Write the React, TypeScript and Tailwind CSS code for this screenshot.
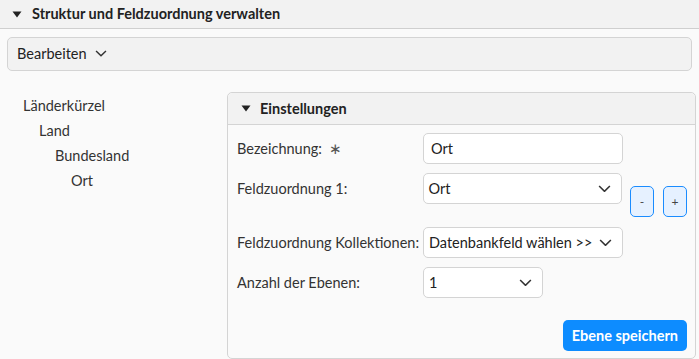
import React from "react";

function Caret() {
  return (
    <svg width="10" height="7" viewBox="0 0 10 7" className="shrink-0">
      <path d="M0.5 0.5 L9.5 0.5 L5 6.5 Z" fill="#222" />
    </svg>
  );
}

function Chevron({ size = 13 }: { size?: number }) {
  return (
    <svg width={size} height={size * 0.6} viewBox="0 0 13 8" className="shrink-0">
      <path d="M1 1 L6.5 6.5 L12 1" fill="none" stroke="#333" strokeWidth="1.6" />
    </svg>
  );
}

function Select({ value, width }: { value: string; width: string }) {
  return (
    <div
      className={`${width} h-[31px] rounded-[5px] border border-[#d4d4d4] bg-white flex items-center justify-between pl-[5px] pr-[10px] text-[14.5px] text-[#222]`}
    >
      <span>{value}</span>
      <Chevron />
    </div>
  );
}

export default function App() {
  return (
    <div
      className="w-[699px] h-[359px] overflow-hidden bg-[#fafafa] text-[#333]"
      style={{ fontFamily: "Lato, 'Noto Sans', sans-serif" }}
    >
      {/* Section header */}
      <div className="h-[29px] bg-[#f2f2f2] border-b border-[#cfcfcf] flex items-center gap-[10px] pl-[12px]">
        <Caret />
        <span className="text-[14.5px] font-bold text-[#222]">
          Struktur und Feldzuordnung verwalten
        </span>
      </div>

      {/* Bearbeiten */}
      <div className="mx-[7px] mt-[8px] h-[34px] rounded-[5px] border border-[#d4d4d4] bg-[#f2f2f2] flex items-center gap-[8px] pl-[9px] text-[14.5px] text-[#222]">
        <span>Bearbeiten</span>
        <Chevron size={12} />
      </div>

      <div className="flex mt-[21px]">
        {/* Tree */}
        <div className="w-[227px] pt-[1px] text-[14.5px] text-[#333]">
          <div className="h-[25px] flex items-center pl-[23px]">Länderkürzel</div>
          <div className="h-[25px] flex items-center pl-[39px]">Land</div>
          <div className="h-[25px] flex items-center pl-[55px]">Bundesland</div>
          <div className="h-[25px] flex items-center pl-[71px]">Ort</div>
        </div>

        {/* Einstellungen panel */}
        <div className="w-[469px] h-[267px] rounded-[5px] border border-[#d4d4d4] bg-[#fafafa] flex flex-col">
          <div className="h-[32px] bg-[#f2f2f2] border-b border-[#d4d4d4] rounded-t-[5px] flex items-center gap-[9px] pl-[13px]">
            <Caret />
            <span className="text-[14.5px] font-bold text-[#222]">Einstellungen</span>
          </div>

          <div className="pl-[9px] pr-[8px] pt-[8px] flex flex-col text-[14.5px] text-[#333]">
            <div className="flex items-center">
              <div className="w-[186px]">
                Bezeichnung: <span className="ml-[3px] text-[#555]">∗</span>
              </div>
              <div className="w-[200px] h-[31px] rounded-[5px] border border-[#d4d4d4] bg-white flex items-center pl-[7px] text-[#222]">
                Ort
              </div>
            </div>

            <div className="flex items-start mt-[9px]">
              <div className="w-[186px] h-[31px] flex items-center">Feldzuordnung 1:</div>
              <Select value="Ort" width="w-[200px]" />
              <div className="flex gap-[9px] ml-[8px] mt-[13px]">
                <button className="w-[24px] h-[31px] rounded-[5px] border border-[#1a8cff] bg-[#e6f1ff] text-[12px] text-[#444] flex items-center justify-center">
                  -
                </button>
                <button className="w-[24px] h-[31px] rounded-[5px] border border-[#1a8cff] bg-[#e6f1ff] text-[12px] text-[#444] flex items-center justify-center">
                  +
                </button>
              </div>
            </div>

            <div className="flex items-center mt-[10px]">
              <div className="w-[186px]">Feldzuordnung Kollektionen:</div>
              <Select value="Datenbankfeld wählen >>" width="w-[200px]" />
            </div>

            <div className="flex items-center mt-[9px]">
              <div className="w-[186px]">Anzahl der Ebenen:</div>
              <Select value="1" width="w-[120px]" />
            </div>

            <div className="flex justify-end mt-[22px]">
              <button className="h-[31px] px-[9px] rounded-[5px] bg-[#0d8cff] text-white font-bold text-[14.5px]">
                Ebene speichern
              </button>
            </div>
          </div>
        </div>
      </div>
    </div>
  );
}
